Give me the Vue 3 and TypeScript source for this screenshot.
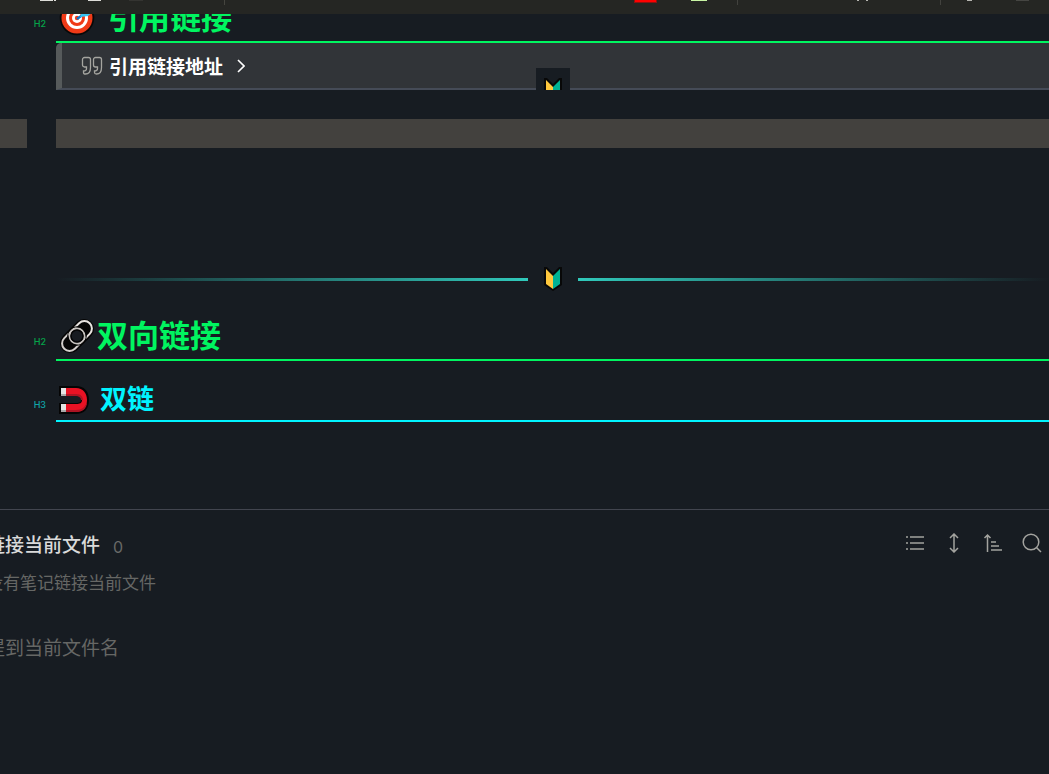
<script setup lang="ts">
interface Note { title: string; count: number; empty: string; mention: string }

const note: Note = {
  title: '链接当前文件',
  count: 0,
  empty: '没有笔记链接当前文件',
  mention: '提到当前文件名',
}
</script>

<template>
  <div class="app">
    <header class="toolbar">
      <svg class="tools-left" width="240" height="14" aria-hidden="true">
        <path d="M40 0h11M52 0v1M55 0v1" stroke="#deded9" stroke-width="2" />
        <path d="M88 0h13" stroke="#deded9" stroke-width="2" />
        <path d="M129 0h14" stroke="#343431" stroke-width="2" />
        <path d="M224.500 0v5" stroke="#45453f" />
      </svg>
      <svg class="tools-right" width="449" height="14" aria-hidden="true">
        <path d="M34 0h23v3H34z" fill="#8d1210" />
        <path d="M35 0h21v2H35z" fill="#ff0000" />
        <path d="M91 0h16v1H91z" fill="#c9f5a4" />
        <path d="M137.500 0v5M340.500 0v5" stroke="#42423e" />
        <path d="M257 0h2v1h-2zM266 0h2v1h-2zM367 0h5v1h-5z" fill="#b5b5b0" />
        <path d="M416 0h13v1h-13z" fill="#454542" />
      </svg>
    </header>

    <main class="editor">
      <section class="block first">
        <span class="level green">H2</span>
        <h2 class="heading two">
          <svg class="emoji spaced" width="36" height="36" viewBox="0 0 36 36" aria-hidden="true">
            <circle cx="18" cy="18" r="17.300" fill="#080808" />
            <circle cx="18" cy="18" r="15.500" fill="#f03a17" />
            <circle cx="18" cy="18" r="11" fill="#fff" />
            <circle cx="18" cy="18" r="8" fill="#f03a17" />
            <circle cx="18" cy="18" r="5" fill="#fff" />
            <circle cx="18" cy="18" r="2.200" fill="#f03a17" />
            <path d="M18 19 26 13" stroke="#0879d1" stroke-width="2.400" />
            <path d="m21 17 2-5 6-5 1 4 4 1-5 4z" fill="#36c5f4" />
          </svg>
          <span>引用链接</span>
        </h2>
      </section>

      <section class="block">
        <div class="callout">
          <button class="fold" type="button">
            <svg width="22" height="20" viewBox="0 0 22 20" fill="none" stroke="#a5a5a0" stroke-width="1.300" aria-hidden="true">
              <path d="M3.500 1.500h4a2 2 0 0 1 2 2v8c0 4-2 6.500-5 6.500-1.500 0-2-.5-2-1.500v-1.500c1.500 0 3-.5 3-2.500v-1.500h-2a2 2 0 0 1-2-2v-5.500a2 2 0 0 1 2-2z" />
              <path d="M14.500 1.500h4a2 2 0 0 1 2 2v8c0 4-2 6.500-5 6.500-1.500 0-2-.5-2-1.500v-1.500c1.500 0 3-.5 3-2.500v-1.500h-2a2 2 0 0 1-2-2v-5.500a2 2 0 0 1 2-2z" />
            </svg>
            <span>引用链接地址</span>
            <svg class="chevron" width="8" height="14" viewBox="0 0 8 14" fill="none" stroke="#fff" stroke-width="1.600" aria-hidden="true">
              <path d="m1 1 6 6-6 6" />
            </svg>
          </button>
          <span class="clip">
            <svg width="18" height="24" viewBox="0 0 18 24" aria-hidden="true">
              <path d="M0 0h3l6 6 6-6h3v18l-9 6-9-6z" fill="#080808" />
              <path d="m2 2 7 7v13l-7-5z" fill="#ffc83d" />
              <path d="m16 2-7 7v13l7-5z" fill="#00b294" />
            </svg>
          </span>
        </div>
      </section>

      <div class="active-row"><span></span><span></span></div>

      <section class="block divider-block">
        <div class="divider" role="separator">
          <span class="line left"></span>
          <svg width="18" height="24" viewBox="0 0 18 24" aria-hidden="true">
            <path d="M0 0h3l6 6 6-6h3v18l-9 6-9-6z" fill="#080808" />
            <path d="m2 2 7 7v13l-7-5z" fill="#ffc83d" />
            <path d="m16 2-7 7v13l7-5z" fill="#00b294" />
          </svg>
          <span class="line right"></span>
        </div>
      </section>

      <section class="block second">
        <span class="level green">H2</span>
        <h2 class="heading two">
          <svg class="emoji" width="36" height="36" viewBox="0 0 36 36" fill="none" aria-hidden="true">
            <g transform="rotate(-45 18 18)">
              <rect x="-2" y="8" width="40" height="20" rx="10" fill="#050505" />
              <rect x="12" y="10.500" width="24" height="15" rx="7.500" stroke="#e8e4e1" stroke-width="2" />
              <rect x="0" y="10.500" width="24" height="15" rx="7.500" stroke="#d2cecb" stroke-width="2" />
              <circle cx="18" cy="18" r="9.300" stroke="#050505" />
              <circle cx="18" cy="18" r="7.500" fill="#171b21" stroke="#c6c2bf" stroke-width="1.800" />
              <circle cx="18" cy="18" r="6" stroke="#050505" stroke-width="1.500" />
            </g>
          </svg>
          <span>双向链接</span>
        </h2>
      </section>

      <section class="block third">
        <span class="level cyan">H3</span>
        <h3 class="heading three">
          <svg class="emoji magnet" width="32" height="30" viewBox="1 0 32 30" aria-hidden="true">
            <path d="M1 1h17c8 0 13 5 13 14s-5 14-13 14H1V18h17c4 0 5-1 5-3s-1-4-5-4H1z" fill="#050505" />
            <path d="M8 3h10c7 0 11 5 11 12s-4 12-11 12H8v-8h10c4 0 6-1 6-4s-2-4-6-4H8z" fill="#e81224" />
            <path d="M8 9h10c5 0 7 3 7 6h-2c0-2-2-4-5-4H8zM8 25h10c6 0 9-3 11-8 0 7-5 10-11 10H8z" fill="#ad1423" />
            <path d="M3 3h5v8H3zM3 19h5v8H3z" fill="#e5e5e5" />
            <path d="M3 9h5v2H3zM3 25h5v2H3z" fill="#aaa" />
          </svg>
          <span>双链</span>
        </h3>
      </section>
    </main>

    <aside class="backlinks">
      <div class="panel-head">
        <h4>{{ note.title }}</h4>
        <span class="count">{{ note.count }}</span>
        <nav class="actions" aria-label="反向链接">
          <button type="button" aria-label="列表">
            <svg width="20" height="20" viewBox="0 0 20 20">
              <path d="M1 4h2M1 10h2M1 16h2M5 4h14M5 10h14M5 16h14" />
            </svg>
          </button>
          <button type="button" aria-label="展开">
            <svg width="20" height="20" viewBox="0 0 20 20">
              <path d="M10 1v18M6 5l4-4 4 4M6 15l4 4 4-4" />
            </svg>
          </button>
          <button type="button" aria-label="排序">
            <svg width="20" height="20" viewBox="0 0 20 20">
              <path d="M4.500 19V2M1.500 5l3-3 3 3M8 9h5M8 13h8M8 17h11" />
            </svg>
          </button>
          <button type="button" aria-label="搜索">
            <svg width="20" height="20" viewBox="0 0 20 20">
              <circle cx="9" cy="9" r="7.800" /><path d="m14.500 14.500 4.500 4.500" />
            </svg>
          </button>
        </nav>
      </div>
      <p class="empty">{{ note.empty }}</p>
      <p class="mention">{{ note.mention }}</p>
    </aside>
  </div>
</template>

<style>
html, body { margin: 0; background: #171c22; }
</style>

<style scoped>
.app {
  min-height: 100vh;
  box-sizing: border-box;
  overflow: hidden;
  background: #171c22;
  color: #dadada;
  font-family: Inter, "Noto Sans CJK SC", sans-serif;
}
.toolbar {
  display: flex;
  justify-content: space-between;
  height: 14px;
  background: #252623;
}
.editor { overflow: hidden; padding-bottom: 87px; }
.block {
  display: grid;
  grid-template-columns: 56px minmax(0, 1fr);
}
.block > :last-child { grid-column: 2; }
.first { margin-top: -19px; }
.level {
  align-self: center;
  justify-self: end;
  margin-right: 10px;
  padding-top: 10px;
  font-size: 9px;
  line-height: 12px;
  font-weight: 500;
}
.green { color: #05a44a; }
.cyan { color: #10a5aa; }
.heading {
  display: flex;
  align-items: center;
  box-sizing: border-box;
  margin: 0;
  padding-left: 3px;
  border-bottom: 2px solid;
  font-weight: 700;
}
.two { height: 48px; color: #00f560; font-size: 31px; line-height: 46px; }
.three { height: 46px; padding-top: 4px; color: #00f4ff; font-size: 27px; line-height: 40px; }
.third .level { padding-top: 12px; }
.emoji { flex: none; margin-right: 2px; overflow: visible; }
.spaced { margin-right: 13px; }
.magnet { margin-right: 9px; }
.callout {
  position: relative;
  display: flex;
  box-sizing: border-box;
  height: 47px;
  border-left: 6px solid #565a5b;
  border-bottom: 2px solid #454b57;
  border-radius: 5px 0 0 0;
  background: #313438;
}
.fold {
  display: flex;
  align-items: center;
  padding: 0 0 0 19px;
  border: 0;
  background: none;
  color: #fff;
  font: inherit;
  font-size: 19px;
  font-weight: 700;
}
.fold span { margin-left: 6px; }
.chevron { margin-left: 14px; }
.clip {
  position: absolute;
  bottom: -2px;
  left: calc(50% - 20px);
  display: flex;
  justify-content: center;
  box-sizing: border-box;
  width: 34px;
  height: 22px;
  padding-top: 10px;
  overflow: hidden;
  background: #171c22;
}
.clip svg { flex: none; }
.active-row {
  display: grid;
  grid-template-columns: 27px minmax(0, 1fr);
  gap: 29px;
  height: 29px;
  margin-top: 29px;
}
.active-row span { background: #43413e; }
.divider-block { margin-top: 114px; }
.divider {
  display: flex;
  align-items: center;
  gap: 16px;
  height: 34px;
}
.line { flex: 1; height: 3px; }
.left { background: linear-gradient(to left, #30c9bb, transparent); }
.right { background: linear-gradient(to right, #30c9bb, transparent); }
.second { margin-top: 17px; }
.third { margin-top: 15px; }
.backlinks {
  margin-left: -14px;
  padding: 18px 7px 0 0;
  border-top: 1px solid #42454f;
}
.panel-head { display: flex; align-items: flex-start; height: 34px; }
h4 { margin: 0; font-size: 19px; line-height: 36px; font-weight: 500; }
.count { margin-left: 13px; color: #686967; font-size: 16px; line-height: 38px; }
.actions { display: flex; gap: 19px; margin: 5px 0 0 auto; }
.actions button { display: flex; padding: 0; border: 0; background: none; }
.actions svg { fill: none; stroke: #a3a39f; stroke-width: 1.500; }
p { margin: 0; color: #666765; }
.empty { margin-top: 8px; font-size: 17px; line-height: 26px; }
.mention { margin-top: 38px; font-size: 19px; line-height: 30px; }
</style>
